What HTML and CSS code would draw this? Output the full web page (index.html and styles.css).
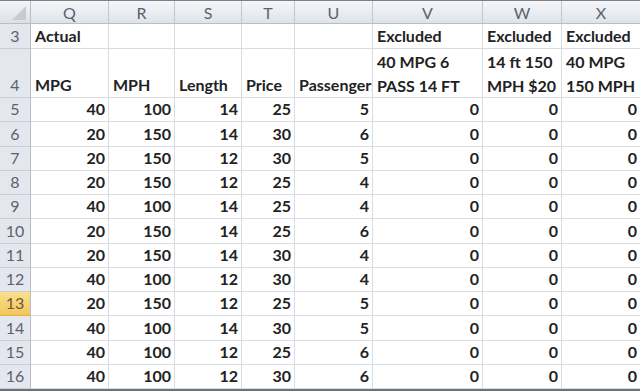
FILE: index.html
```html
<!DOCTYPE html>
<html>
<head>
<meta charset="utf-8">
<link rel="stylesheet" href="styles.css">
</head>
<body>
<div class="sheet">
  <div class="corner"><svg class="tri" width="16" height="16" viewBox="0 0 16 16"><polygon points="15,1 15,15 1,15" fill="#c8ccd2"/></svg></div>
  <div class="ch">Q</div><div class="ch">R</div><div class="ch">S</div><div class="ch">T</div><div class="ch">U</div><div class="ch">V</div><div class="ch">W</div><div class="ch last">X</div>

  <div class="rh">3</div>
  <div class="c">Actual</div><div class="c"></div><div class="c"></div><div class="c"></div><div class="c"></div>
  <div class="c">Excluded</div><div class="c">Excluded</div><div class="c last">Excluded</div>

  <div class="rh">4</div>
  <div class="c">MPG</div><div class="c">MPH</div><div class="c">Length</div><div class="c">Price</div><div class="c clip">Passengers</div>
  <div class="c wrap">40 MPG 6<br>PASS 14 FT</div><div class="c wrap">14 ft 150<br>MPH $20</div><div class="c wrap last">40 MPG<br>150 MPH</div>

  <div class="rh">5</div><div class="c n">40</div><div class="c n">100</div><div class="c n">14</div><div class="c n">25</div><div class="c n">5</div><div class="c n">0</div><div class="c n">0</div><div class="c n last">0</div>
  <div class="rh">6</div><div class="c n">20</div><div class="c n">150</div><div class="c n">14</div><div class="c n">30</div><div class="c n">6</div><div class="c n">0</div><div class="c n">0</div><div class="c n last">0</div>
  <div class="rh">7</div><div class="c n">20</div><div class="c n">150</div><div class="c n">12</div><div class="c n">30</div><div class="c n">5</div><div class="c n">0</div><div class="c n">0</div><div class="c n last">0</div>
  <div class="rh">8</div><div class="c n">20</div><div class="c n">150</div><div class="c n">12</div><div class="c n">25</div><div class="c n">4</div><div class="c n">0</div><div class="c n">0</div><div class="c n last">0</div>
  <div class="rh">9</div><div class="c n">40</div><div class="c n">100</div><div class="c n">14</div><div class="c n">25</div><div class="c n">4</div><div class="c n">0</div><div class="c n">0</div><div class="c n last">0</div>
  <div class="rh">10</div><div class="c n">20</div><div class="c n">150</div><div class="c n">14</div><div class="c n">25</div><div class="c n">6</div><div class="c n">0</div><div class="c n">0</div><div class="c n last">0</div>
  <div class="rh">11</div><div class="c n">20</div><div class="c n">150</div><div class="c n">14</div><div class="c n">30</div><div class="c n">4</div><div class="c n">0</div><div class="c n">0</div><div class="c n last">0</div>
  <div class="rh">12</div><div class="c n">40</div><div class="c n">100</div><div class="c n">12</div><div class="c n">30</div><div class="c n">4</div><div class="c n">0</div><div class="c n">0</div><div class="c n last">0</div>
  <div class="rh active">13</div><div class="c n">20</div><div class="c n">150</div><div class="c n">12</div><div class="c n">25</div><div class="c n">5</div><div class="c n">0</div><div class="c n">0</div><div class="c n last">0</div>
  <div class="rh">14</div><div class="c n">40</div><div class="c n">100</div><div class="c n">14</div><div class="c n">30</div><div class="c n">5</div><div class="c n">0</div><div class="c n">0</div><div class="c n last">0</div>
  <div class="rh">15</div><div class="c n">40</div><div class="c n">100</div><div class="c n">12</div><div class="c n">25</div><div class="c n">6</div><div class="c n">0</div><div class="c n">0</div><div class="c n last">0</div>
  <div class="rh">16</div><div class="c n">40</div><div class="c n">100</div><div class="c n">12</div><div class="c n">30</div><div class="c n">6</div><div class="c n">0</div><div class="c n">0</div><div class="c n last">0</div>
</div>
</body>
</html>
```
FILE: styles.css
```css
html, body {
  margin: 0;
  padding: 0;
  background: #ffffff;
}
.sheet {
  width: 640px;
  height: 391px;
  box-sizing: border-box;
  border-top: 1px solid #7d8188;
  border-bottom: 2px solid #6e7278;
  display: grid;
  grid-template-columns: 31px 78px 66px 67px 53px 78px 110px 79px 78px;
  grid-template-rows: 23px 25px 49px repeat(12, 24.25px);
  overflow: hidden;
  font-family: Lato, "Open Sans", sans-serif;
}
.corner {
  background: linear-gradient(#f3f5f8, #dde1e7);
  border-right: 1px solid #b9bec6;
  border-bottom: 1px solid #b9bec6;
  box-sizing: border-box;
  display: flex;
  align-items: flex-end;
  justify-content: flex-end;
  padding: 0 3px 2px 0;
}
.tri {
  display: block;
}
.ch {
  background: linear-gradient(#f5f7fa, #dfe3e9);
  border-right: 1px solid #c3c8cf;
  border-bottom: 1px solid #b9bec6;
  box-sizing: border-box;
  display: flex;
  align-items: center;
  justify-content: center;
  color: #5b626d;
  font-size: 16px;
  padding-top: 1px;
}
.rh {
  background: #e4e8ee;
  border-right: 1px solid #b9bec6;
  border-bottom: 1px solid #c9cdd4;
  box-sizing: border-box;
  display: flex;
  align-items: flex-end;
  justify-content: center;
  color: #5b626d;
  font-size: 16px;
  line-height: 20px;
  padding-bottom: 2px;
}
.rh.active {
  background: linear-gradient(#fbe08f, #f2c55b);
  color: #6a5a35;
  border-bottom-color: #e1b451;
}
.c {
  border-right: 1px solid #dadcdf;
  border-bottom: 1px solid #dadcdf;
  box-sizing: border-box;
  display: flex;
  align-items: flex-end;
  padding: 0 3px 2px 4px;
  color: #222222;
  font-weight: 700;
  font-size: 16px;
  line-height: 20px;
  white-space: nowrap;
  overflow: hidden;
}
.c.n {
  justify-content: flex-end;
}
.c.wrap {
  display: block;
  line-height: 24px;
  padding-top: 1px;
}
.c.clip {
  overflow: hidden;
}
.last {
  border-right: none;
}
```
